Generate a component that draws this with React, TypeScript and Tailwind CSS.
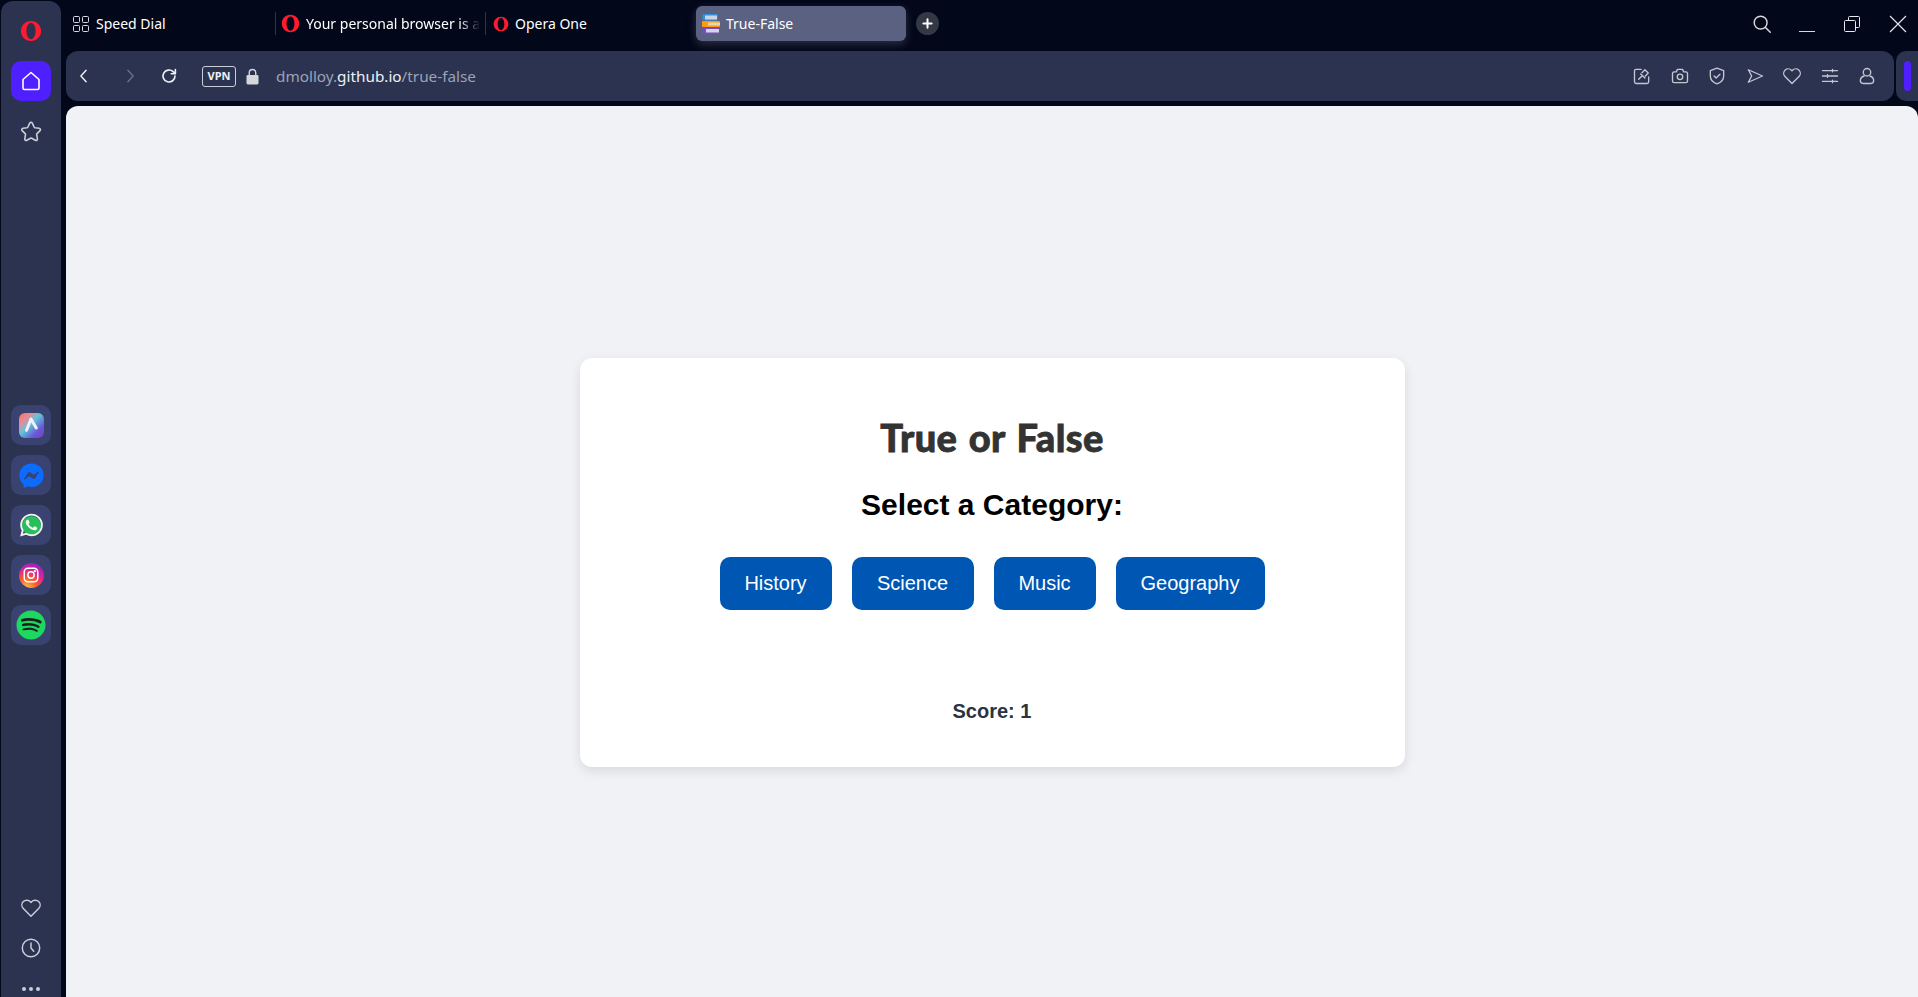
import { FaFacebookMessenger, FaSpotify, FaWhatsapp } from "react-icons/fa";

const ui = "font-['Noto_Sans',sans-serif]";

function OperaLogo({ className }: { className: string }) {
  return (
    <svg viewBox="0 0 24 24" className={className}>
      <path
        fillRule="evenodd"
        fill="#ff1b2d"
        d="M12 1C5.600 1 1 6 1 12s4.600 11 11 11 11-5 11-11S18.400 1 12 1Zm0 2c2.900 0 5 4 5 9s-2.100 9-5 9-5-4-5-9 2.100-9 5-9Z"
      />
    </svg>
  );
}

function Favicon() {
  return (
    <svg viewBox="0 0 18 20" className="w-[18px] h-[20px] shrink-0">
      <rect x="0.500" y="0" width="15" height="6.500" rx="1" fill="#2f8fdc" />
      <rect x="3" y="1.500" width="12" height="4" fill="#c9d6e2" />
      <rect x="0" y="7" width="18" height="6" rx="1" fill="#ff9a0a" />
      <rect x="6" y="8.500" width="12" height="3" fill="#e9d6ae" />
      <rect x="0.500" y="13.500" width="17" height="6.500" rx="1" fill="#7b4bc4" />
      <rect x="4" y="15" width="13" height="3.500" fill="#d4d6e2" />
    </svg>
  );
}

function Icon({ children, className = "w-5 h-5" }: { children: React.ReactNode; className?: string }) {
  return (
    <svg
      viewBox="0 0 24 24"
      fill="none"
      stroke="currentColor"
      strokeWidth="1.600"
      strokeLinecap="round"
      strokeLinejoin="round"
      className={className}
    >
      {children}
    </svg>
  );
}

function Heart({ className }: { className?: string }) {
  return (
    <Icon className={className}>
      <path d="M12 21 3.600 12.600a5.400 5.400 0 0 1 0-7.600c2.200-2.100 5.700-2 7.800.200l.600.700.600-.700c2.100-2.200 5.600-2.300 7.800-.200a5.400 5.400 0 0 1 0 7.600Z" />
    </Icon>
  );
}

function AppTile({ children }: { children: React.ReactNode }) {
  return <div className="w-10 h-10 rounded-[10px] bg-[#3a4370] flex items-center justify-center">{children}</div>;
}

function Sidebar() {
  return (
    <aside className="w-[60px] ml-px mt-px shrink-0 rounded-t-[12px] bg-[#2c3350] flex flex-col items-center text-[#c9ced9]">
      <OperaLogo className="w-[22px] h-[22px] mt-[19px]" />
      <div className="w-10 h-10 mt-[19px] rounded-[10px] bg-[#4f1fff] flex items-center justify-center text-white">
        <Icon className="w-[24px] h-[24px]">
          <path d="M12 3.500 4 10.500V19a1.500 1.500 0 0 0 1.500 1.500h13A1.500 1.500 0 0 0 20 19v-8.500Z" />
        </Icon>
      </div>
      <div className="mt-[17px] h-[26px] flex items-center">
        <Icon className="w-[24px] h-[24px]">
          <path d="M12 3.200c.6 0 1 .4 1.300 1l1.800 3.800c.2.400.5.600.9.700l4.100.6c1.400.2 1.800 1.400.9 2.300l-3 3c-.3.300-.4.700-.3 1.100l.7 4.100c.2 1.300-1 2.100-2.100 1.500l-3.600-2c-.4-.2-.8-.2-1.200 0l-3.600 2c-1.100.6-2.300-.2-2.100-1.500l.7-4.100c.1-.4 0-.8-.3-1.100l-3-3c-.9-.9-.5-2.100.9-2.300L8 8.700c.4-.1.700-.3.900-.7l1.800-3.800c.3-.6.700-1 1.300-1Z" />
        </Icon>
      </div>

      <div className="mt-[261px] flex flex-col gap-[10px]">
        <AppTile>
          <div className="w-[25px] h-[25px] rounded-[6px] bg-[linear-gradient(135deg,#f0785d_0%,#e88a9a_25%,#5fc6d9_45%,#6a55d8_75%,#7a3fc0_100%)] flex items-center justify-center">
            <svg viewBox="0 0 24 24" className="w-[18px] h-[18px]" fill="none" stroke="#f4f1f8" strokeWidth="4" strokeLinecap="round">
              <path d="M12 4 6 19M12 4l7 12" />
            </svg>
          </div>
        </AppTile>
        <AppTile>
          <FaFacebookMessenger className="w-[25px] h-[25px] text-[#0b6cff]" />
        </AppTile>
        <AppTile>
          <div className="relative w-[25px] h-[25px] flex items-center justify-center">
            <div className="absolute inset-[3px] rounded-full bg-[#25c05a]" />
            <FaWhatsapp className="relative w-[26px] h-[26px] text-[#f1f4f1]" />
          </div>
        </AppTile>
        <AppTile>
          <div className="w-[25px] h-[25px] rounded-full bg-[radial-gradient(circle_at_30%_100%,#fdc14a_0%,#f5582f_35%,#d6249f_62%,#6a22d6_100%)] flex items-center justify-center">
            <svg viewBox="0 0 24 24" className="w-[18px] h-[18px]" fill="none" stroke="#ffffff" strokeWidth="2">
              <rect x="3" y="3" width="18" height="18" rx="5" />
              <circle cx="12" cy="12" r="4.200" />
              <circle cx="17.200" cy="6.800" r="0.600" fill="#ffffff" />
            </svg>
          </div>
        </AppTile>
        <AppTile>
          <div className="relative w-[30px] h-[30px] flex items-center justify-center">
            <div className="absolute inset-[1px] rounded-full bg-[#1a1f1c]" />
            <FaSpotify className="relative w-[30px] h-[30px] text-[#1ed760]" />
          </div>
        </AppTile>
      </div>

      <div className="mt-auto flex flex-col items-center">
        <Heart className="w-[22px] h-[22px]" />
        <div className="mt-[18px]">
          <Icon className="w-[22px] h-[22px]">
            <circle cx="12" cy="12" r="9.500" />
            <path d="M12 6.500V12l3 3.500" />
          </Icon>
        </div>
        <div className="mt-[28px] mb-[6px] flex gap-[3px]">
          <span className="w-1 h-1 rounded-full bg-[#c9ced9]" />
          <span className="w-1 h-1 rounded-full bg-[#c9ced9]" />
          <span className="w-1 h-1 rounded-full bg-[#c9ced9]" />
        </div>
      </div>
    </aside>
  );
}

function TabBar() {
  return (
    <div className={`h-[47px] mb-[4px] flex items-center text-[14px] text-white ${ui}`}>
      {/* Speed Dial */}
      <div className="w-[209px] pl-[7px] flex items-center gap-[7px]">
        <svg viewBox="0 0 16 16" className="w-4 h-4" fill="none" stroke="#d7dae2" strokeWidth="1">
          <rect x="0.500" y="0.500" width="6" height="6" rx="1" />
          <rect x="9.500" y="0.500" width="6" height="6" rx="1" />
          <rect x="0.500" y="9.500" width="6" height="6" rx="1" />
          <rect x="9.500" y="9.500" width="6" height="6" rx="1" />
        </svg>
        <span>Speed Dial</span>
      </div>
      {/* Other tabs */}
      <div className="w-[210px] h-[23px] border-l border-[#2f3446] pl-[5px] flex items-center gap-[6px]">
        <OperaLogo className="w-[19px] h-[19px] shrink-0" />
        <span className="whitespace-nowrap [mask-image:linear-gradient(to_right,black_88%,transparent)]">
          Your personal browser is a
        </span>
      </div>
      <div className="w-[211px] h-[23px] border-l border-[#2f3446] pl-[7px] flex items-center gap-[6px]">
        <OperaLogo className="w-[16px] h-[16px] shrink-0" />
        <span>Opera One</span>
      </div>
      {/* Active tab */}
      <div className="w-[210px] h-[35px] rounded-[6px] bg-[#5b6180] pl-[6px] flex items-center gap-[6px] shadow-[0_3px_8px_rgba(120,125,150,0.35)]">
        <Favicon />
        <span>True-False</span>
      </div>
      <div className="ml-[10px] w-[23px] h-[23px] rounded-full bg-[#343845] flex items-center justify-center">
        <svg viewBox="0 0 12 12" className="w-[11px] h-[11px]" stroke="#ffffff" strokeWidth="2.200" strokeLinecap="round">
          <path d="M6 1.500v9M1.500 6h9" />
        </svg>
      </div>
      {/* Window controls */}
      <div className="ml-auto flex items-center text-[#d5d8e0]">
        <Icon className="w-[22px] h-[22px]">
          <circle cx="10.500" cy="10.500" r="7" />
          <path d="m15.800 15.800 5.200 5.200" />
        </Icon>
        <div className="ml-[26px] w-4 h-[15px] border-b border-[#d5d8e0] translate-y-[1px]" />
        <svg viewBox="0 0 16 16" className="ml-[29px] w-4 h-4" fill="none" stroke="#e6e8ee" strokeWidth="1">
          <rect x="0.500" y="4.500" width="11" height="11" rx="1" />
          <path d="M4.500 4.500V1.500a1 1 0 0 1 1-1h9a1 1 0 0 1 1 1v9a1 1 0 0 1-1 1h-3" />
        </svg>
        <svg viewBox="0 0 18 18" className="ml-[29px] mr-[11px] w-[18px] h-[18px]" stroke="#e6e8ee" strokeWidth="1.100">
          <path d="M1 1l16 16M17 1 1 17" />
        </svg>
      </div>
    </div>
  );
}

function AddressBar() {
  return (
    <div className="h-[50px] flex gap-[2px]">
      <div className="flex-1 rounded-[12px] bg-[#2c3350] flex items-center text-[#e2e5ec]">
        <svg viewBox="0 0 10 16" className="ml-[13px] w-[9px] h-[14px]" fill="none" stroke="#f0f2f6" strokeWidth="1.600" strokeLinecap="round" strokeLinejoin="round">
          <path d="M8 1.500 2 8l6 6.500" />
        </svg>
        <svg viewBox="0 0 10 16" className="ml-[38px] w-[9px] h-[14px]" fill="none" stroke="#69708a" strokeWidth="1.600" strokeLinecap="round" strokeLinejoin="round">
          <path d="M2 1.500 8 8l-6 6.500" />
        </svg>
        <svg viewBox="0 0 24 24" className="ml-[25px] w-[18px] h-[18px]" fill="none" stroke="#eef0f4" strokeWidth="2.200" strokeLinecap="round" strokeLinejoin="round">
          <path d="M20 12a8 8 0 1 1-2.500-5.800L20 8.500" />
          <path d="M20.500 3.500v5.500H15" />
        </svg>
        <div className={`ml-[24px] w-[34px] h-[21px] rounded-[3px] border border-[#c9ced9] flex items-center justify-center text-[11px] font-bold text-[#eef0f4] ${ui}`}>
          VPN
        </div>
        <svg viewBox="0 0 14 18" className="ml-[10px] w-[13px] h-[17px]">
          <path d="M3.500 8V5a3.500 3.500 0 0 1 7 0v3" fill="none" stroke="#d5d7d8" strokeWidth="1.500" />
          <rect x="0.500" y="7.500" width="13" height="10" rx="1.500" fill="#d5d7d8" />
        </svg>
        <div className={`ml-[17px] text-[15.300px] text-[#9ba3b6] ${ui}`}>
          dmolloy.<span className="text-[#eef0f4]">github.io</span>/true-false
        </div>

        <div className="ml-auto mr-[17px] flex items-center gap-[17.500px] text-[#c3c7d1]">
          <Icon>
            <path d="M11 4H5a2 2 0 0 0-2 2v13a2 2 0 0 0 2 2h13a2 2 0 0 0 2-2v-6" />
            <path d="m8 16 4.500-4.500m-2-2 5 5m-3.500-6.500 3.500-3.500 4 4-3.500 3.500" />
          </Icon>
          <Icon>
            <path d="M3 9a2 2 0 0 1 2-2h2.500L9 4h6l1.500 3H19a2 2 0 0 1 2 2v9a2 2 0 0 1-2 2H5a2 2 0 0 1-2-2Z" />
            <circle cx="12" cy="13" r="3.300" />
          </Icon>
          <Icon>
            <path d="M12 2.500 20 5.500V12c0 5-3.500 8-8 9.500-4.500-1.500-8-4.500-8-9.500V5.500Z" />
            <path d="m8.500 12 2.500 2.500 4.500-4.500" />
          </Icon>
          <Icon>
            <path d="M4 4.500 21 12 4 19.500 8 12Z" />
          </Icon>
          <Heart className="w-5 h-5" />
          <Icon>
            <path d="M3 5.500h18M3 12h18M3 18.500h18M15 4v3M9 10.500v3M15 17v3" />
          </Icon>
          <Icon>
            <circle cx="12" cy="7.500" r="4.500" />
            <path d="M8.500 12C5.500 13 4 15 4 17.500 4 20 5.500 21 7.500 21h9c2 0 3.500-1 3.500-3.500 0-2.500-1.500-4.500-4.500-5.500" />
          </Icon>
        </div>
      </div>
      <div className="w-[22px] rounded-l-[10px] bg-[#2c3350] flex items-center pl-2">
        <div className="w-[7px] h-[30px] rounded-full bg-[#4f1fff]" />
      </div>
    </div>
  );
}

function CategoryButton({ label, width }: { label: string; width: string }) {
  return (
    <button className={`${width} h-[53px] pb-[2px] rounded-[10px] bg-[#0056b3] text-white text-[20px]`}>{label}</button>
  );
}

function QuizCard() {
  return (
    <div className="w-[825px] h-[409px] rounded-[12px] bg-white shadow-[0_4px_12px_rgba(0,0,0,0.1)] flex flex-col items-center font-['Liberation_Sans',sans-serif]">
      <h1 className="mt-[53px] h-[52px] leading-[52px] text-[38px] font-black tracking-[0.4px] [word-spacing:2px] text-[#333333] font-['Lato',sans-serif] [-webkit-text-stroke:0.8px_#333333]">
        True or False
      </h1>
      <h2 className="mt-[22px] h-[40px] leading-[40px] text-[30px] font-bold text-black">Select a Category:</h2>
      <div className="mt-[32px] flex gap-5">
        <CategoryButton label="History" width="w-[112px]" />
        <CategoryButton label="Science" width="w-[122px]" />
        <CategoryButton label="Music" width="w-[102px]" />
        <CategoryButton label="Geography" width="w-[149px]" />
      </div>
      <p className="mt-[89px] text-[20px] leading-[24px] font-bold text-[#2c3340]">Score: 1</p>
    </div>
  );
}

export default function App() {
  return (
    <div className="h-screen overflow-hidden bg-[#03071a] flex">
      <Sidebar />
      <div className="flex-1 min-w-0 ml-[5px] flex flex-col">
        <TabBar />
        <AddressBar />
        <main className="flex-1 mt-[5px] rounded-t-[12px] bg-[#f0f2f6] flex justify-center pt-[252px]">
          <QuizCard />
        </main>
      </div>
    </div>
  );
}
